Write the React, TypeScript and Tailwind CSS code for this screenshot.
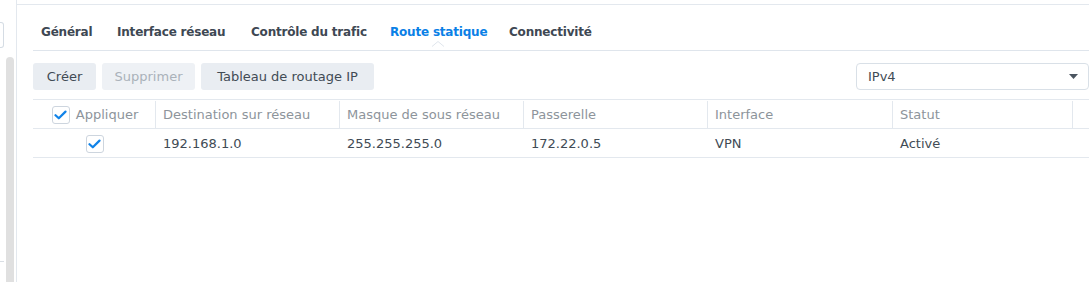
import React from "react";

const Check: React.FC = () => (
  <span className="flex h-[18px] w-[18px] items-center justify-center rounded-[3px] border border-[#cdd5de] bg-white">
    <svg width="13" height="10" viewBox="0 0 13 10" fill="none">
      <path d="M1.5 5.2 L4.8 8.3 L11.5 1.6" stroke="#1183e8" strokeWidth="2.2" strokeLinecap="round" strokeLinejoin="round" />
    </svg>
  </span>
);

const tabs = [
  { label: "Général", w: "w-[52px]" },
  { label: "Interface réseau", w: "w-[110px]" },
  { label: "Contrôle du trafic", w: "w-[115px]" },
  { label: "Route statique", w: "w-[95px]" },
  { label: "Connectivité", w: "w-[82px]" },
];
const cols = [
  { label: "Destination sur réseau", w: "w-[184px]" },
  { label: "Masque de sous réseau", w: "w-[184px]" },
  { label: "Passerelle", w: "w-[184px]" },
  { label: "Interface", w: "w-[185px]" },
  { label: "Statut", w: "w-[180px]" },
];
const row = ["192.168.1.0", "255.255.255.0", "172.22.0.5", "VPN", "Activé"];

export default function App() {
  return (
    <div className="flex h-[282px] w-[1089px] overflow-hidden bg-white font-['DejaVu_Sans',sans-serif] text-[13px] text-[#414b55]">
      {/* left strip */}
      <div className="flex w-[17px] shrink-0 border-r border-[#e3e8ee]">
        <div className="flex w-[4px] flex-col">
          <div className="mt-[22px] h-[26px] rounded-r-[3px] border border-l-0 border-[#d5dce4]" />
          <div className="mt-[213px] h-px bg-[#d9dee4]" />
        </div>
        <div className="ml-[2px] mt-[57px] w-[8px] rounded-t-[4px] bg-[#e0e0e0]" />
      </div>

      {/* main */}
      <div className="mt-[4px] flex flex-1 flex-col border-t border-[#e3e8ee] pl-[16px]">
        <div className="relative flex h-[46px] items-center gap-[24px] border-b border-[#dfe5ec] pl-[8px] pt-[8px] text-[12px] font-bold tracking-[-0.2px]">
          {tabs.map((t) => (
            <div
              key={t.label}
              className={
                t.w +
                " relative whitespace-nowrap " +
                (t.label === "Route statique" ? "text-[#0a80e6]" : "text-[#3e4853]")
              }
            >
              {t.label}
              {t.label === "Route statique" && (
                <svg className="absolute left-1/2 top-[18px] -ml-[6px]" width="12" height="6" viewBox="0 0 12 6">
                  <path d="M0 5.5 L6 0.5 L12 5.5" fill="#fff" stroke="#dfe5ec" strokeWidth="1" />
                </svg>
              )}
            </div>
          ))}
        </div>

        <div className="mt-[12px] flex items-center gap-[6px]">
          <button className="h-[27px] w-[63px] rounded-[3px] bg-[#e9edf2] text-[#414b55]">Créer</button>
          <button className="h-[27px] w-[93px] rounded-[3px] bg-[#eef1f5] text-[#aab2ba]">Supprimer</button>
          <button className="h-[27px] w-[173px] rounded-[3px] bg-[#e9edf2] text-[#414b55]">Tableau de routage IP</button>
          <div className="ml-auto flex h-[27px] w-[233px] items-center justify-between rounded-[4px] border border-[#d9e0e7] pl-[11px] pr-[10px]">
            <span>IPv4</span>
            <svg width="9" height="5" viewBox="0 0 9 5">
              <path d="M0 0 H9 L4.5 5 Z" fill="#4b5560" />
            </svg>
          </div>
        </div>

        <div className="mt-[9px] border-t border-[#e3e8ee]">
          <div className="flex h-[29px] border-b border-[#e3e8ee] pt-px text-[#8d949b]">
            <div className="flex w-[123px] items-center justify-center gap-[6px] border-r border-[#e3e8ee] pl-[2px]">
              <Check />
              <span>Appliquer</span>
            </div>
            {cols.map((c) => (
              <div key={c.label} className={c.w + " flex items-center border-r border-[#e3e8ee] pl-[7px]"}>
                {c.label}
              </div>
            ))}
            <div className="flex-1" />
          </div>
          <div className="flex h-[29px] border-b border-[#e3e8ee] pt-px">
            <div className="flex w-[123px] items-center justify-center">
              <Check />
            </div>
            {row.map((v, i) => (
              <div key={v} className={cols[i].w + " flex items-center pl-[7px]"}>
                {v}
              </div>
            ))}
          </div>
        </div>
      </div>
    </div>
  );
}
